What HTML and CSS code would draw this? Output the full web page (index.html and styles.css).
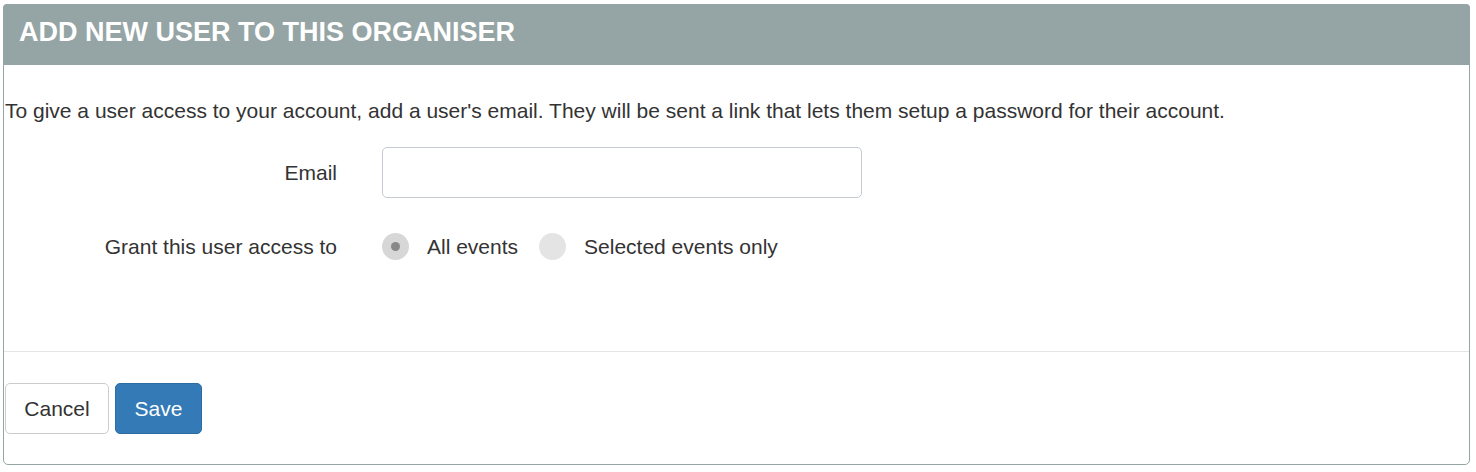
FILE: index.html
```html
<!DOCTYPE html>
<html>
<head>
<meta charset="utf-8">
<link rel="stylesheet" href="styles.css">
</head>
<body>
<div class="panel">
  <div class="panel-heading">ADD NEW USER TO THIS ORGANISER</div>
  <div class="panel-body">
    <p class="intro">To give a user access to your account, add a user's email. They will be sent a link that lets them setup a password for their account.</p>
    <div class="form-row">
      <label class="row-label">Email</label>
      <div class="row-control"><input class="text-input" type="text"></div>
    </div>
    <div class="form-row radios-row">
      <label class="row-label">Grant this user access to</label>
      <div class="row-control radios">
        <span class="radio checked"></span><span class="radio-label">All events</span>
        <span class="radio"></span><span class="radio-label">Selected events only</span>
      </div>
    </div>
  </div>
  <div class="panel-footer">
    <button class="btn btn-default">Cancel</button>
    <button class="btn btn-primary">Save</button>
  </div>
</div>
</body>
</html>
```
FILE: styles.css
```css
* { box-sizing: border-box; }
html, body { background: #fff; }
body {
  margin: 0;
  padding: 4px 6px 0 3px;
  font-family: "Liberation Sans", Arial, Helvetica, sans-serif;
  color: #333;
  font-size: 21px;
}
.panel {
  border: 1px solid #95a5a5;
  border-radius: 5px;
  height: 461px;
  display: flex;
  flex-direction: column;
}
.panel-heading {
  background: #95a5a5;
  color: #fff;
  font-weight: bold;
  font-size: 27px;
  height: 61px;
  padding: 13px 0 0 16px;
  border-radius: 4px 4px 0 0;
  margin: -1px -1px 0 -1px;
}
.panel-body {
  height: 287px;
  border-bottom: 1px solid #e5e5e5;
  flex-shrink: 0;
}
.intro {
  margin: 32px 0 0 1px;
  line-height: 28px;
}
.form-row {
  display: flex;
  align-items: center;
  margin-top: 22px;
}
.radios-row { margin-top: 35px; }
.row-label {
  width: 333px;
  text-align: right;
}
.row-control { margin-left: 45px; }
.text-input {
  width: 480px;
  height: 51px;
  border: 1px solid #c5cad3;
  border-radius: 5px;
  font-size: 21px;
  font-family: inherit;
  padding: 0 12px;
  display: block;
}
.radios {
  display: flex;
  align-items: center;
}
.radio {
  width: 27px;
  height: 27px;
  border-radius: 50%;
  background: #e4e4e4;
  position: relative;
  display: inline-block;
}
.radio.checked { background: #d7d7d7; }
.radio.checked::after {
  content: "";
  position: absolute;
  left: 9px; top: 9px;
  width: 9px; height: 9px;
  border-radius: 50%;
  background: #888;
}
.radio-label { margin: 0 21px 0 18px; }
.panel-footer {
  padding: 31px 0 0 1px;
  display: flex;
  gap: 6px;
}
.btn {
  font-family: inherit;
  font-size: 21px;
  height: 51px;
  border-radius: 5px;
  border: 1px solid #ccc;
  cursor: pointer;
  padding: 0;
}
.btn-default {
  background: #fff;
  color: #333;
  width: 104px;
}
.btn-primary {
  background: #337ab7;
  border-color: #2e6da4;
  color: #fff;
  width: 87px;
}
```
